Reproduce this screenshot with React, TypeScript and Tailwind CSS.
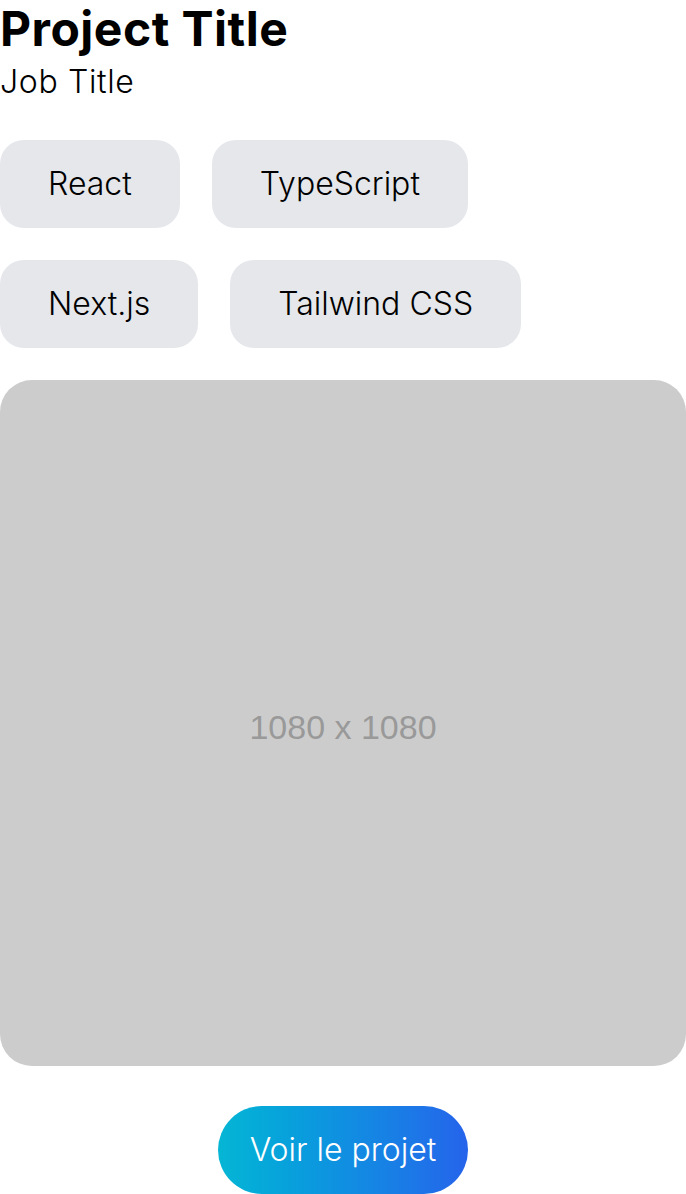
const skills = ['React', 'TypeScript', 'Next.js', 'Tailwind CSS']

export default function App() {
  return (
    <div className="w-[686px] bg-white text-black font-['Inter',sans-serif]">
      <h1 className="text-[48px] leading-[58px] font-bold tracking-[0.01em]">Project Title</h1>
      <p className="text-[32px] leading-[48px] font-light tracking-[0.02em]">Job Title</p>

      <div className="mt-[34px] flex flex-wrap gap-8">
        {skills.map((s) => (
          <span
            key={s}
            className="px-12 py-5 rounded-3xl bg-gray-200 text-[32px] leading-[48px] font-light"
          >
            {s}
          </span>
        ))}
      </div>

      <div className="mt-8 w-full aspect-square rounded-[32px] bg-[#cccccc] flex items-center justify-center">
        <span className="pt-2 text-[34px] text-[#999999] font-['Liberation_Sans',Arial,sans-serif]">
          1080 x 1080
        </span>
      </div>

      <div className="mt-10 flex justify-center">
        <button className="px-8 py-5 rounded-full bg-gradient-to-r from-[#06b6d4] to-[#2563eb] text-white text-[32px] leading-[48px] font-light">
          Voir le projet
        </button>
      </div>
    </div>
  )
}
